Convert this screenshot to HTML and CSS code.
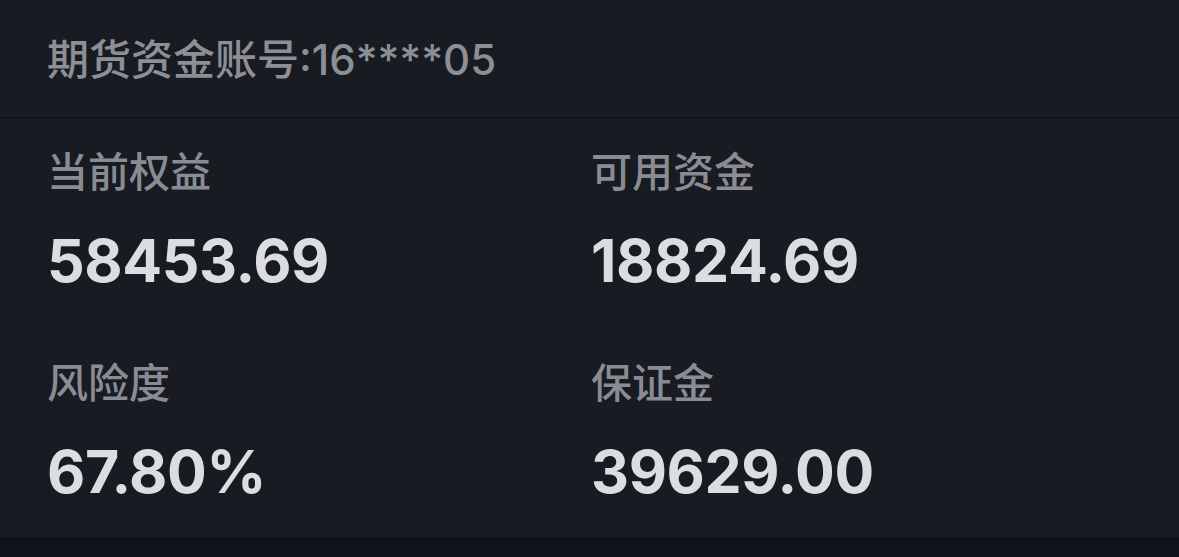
FILE: index.html
```html
<!DOCTYPE html>
<html lang="zh-CN">
<head>
<meta charset="utf-8">
<link rel="stylesheet" href="styles.css">
</head>
<body>
<div class="card">
  <div class="header"><span class="cjk">期货资金账号</span><span class="num">:16****05</span></div>
  <div class="grid">
    <div class="cell">
      <div class="label">当前权益</div>
      <div class="value">58453.69</div>
    </div>
    <div class="cell">
      <div class="label">可用资金</div>
      <div class="value">18824.69</div>
    </div>
    <div class="cell">
      <div class="label">风险度</div>
      <div class="value">67.80%</div>
    </div>
    <div class="cell">
      <div class="label">保证金</div>
      <div class="value">39629.00</div>
    </div>
  </div>
</div>
<div class="footer"></div>
</body>
</html>
```
FILE: styles.css
```css
html, body {
  margin: 0;
  padding: 0;
  background: #191b23;
  width: 1179px;
  height: 557px;
  overflow: hidden;
}
.card {
  height: 537px;
  display: flex;
  flex-direction: column;
  background: #191b23;
}
.header {
  height: 117px;
  line-height: 117px;
  padding-left: 47px;
  border-bottom: 2px solid #121419;
  color: #8d8f96;
  font-size: 42px;
  font-family: "Inter", "Noto Sans CJK SC", sans-serif;
  box-sizing: content-box;
}
.header .cjk {
  font-family: "Noto Sans CJK SC", sans-serif;
  font-weight: 500;
  position: relative;
  top: -2px;
}
.header .num {
  font-size: 42px;
  font-weight: 500;
  position: relative;
  top: -2px;
}
.grid {
  display: grid;
  grid-template-columns: 544px 1fr;
  padding: 20px 0 0 47px;
  row-gap: 49px;
}
.label {
  font-family: "Noto Sans CJK SC", sans-serif;
  font-size: 41px;
  line-height: 60px;
  color: #8a8c93;
  font-weight: 500;
}
.value {
  margin-top: 22px;
  font-family: "Inter", "Liberation Sans", sans-serif;
  font-weight: 700;
  font-size: 59px;
  letter-spacing: -0.4px;
  line-height: 80px;
  color: #dcdde1;
}
.footer {
  height: 20px;
  background: #10121a;
}
```
